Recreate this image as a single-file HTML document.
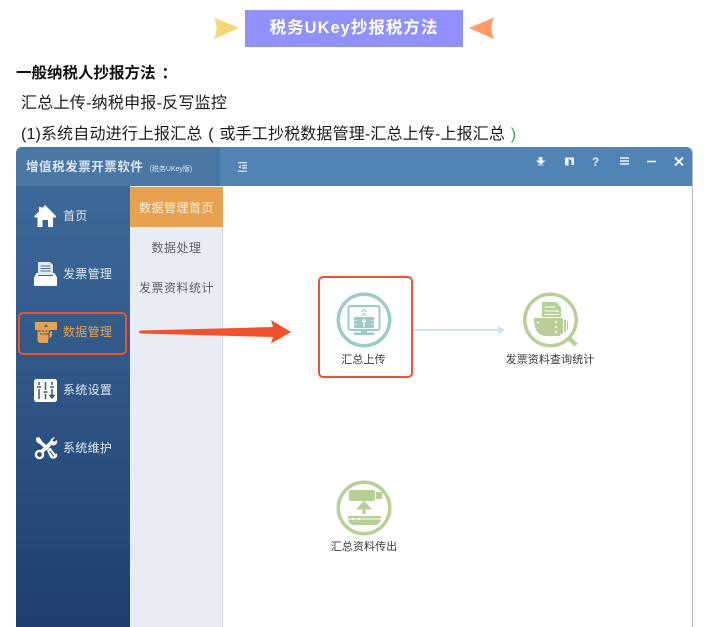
<!DOCTYPE html>
<html lang="zh">
<head>
<meta charset="utf-8">
<style>
html,body{margin:0;padding:0;background:#fff}
body{width:704px;height:627px;position:relative;overflow:hidden;font-family:"Liberation Sans","Noto Sans CJK SC",sans-serif;color:#222}
.a{position:absolute;white-space:nowrap}
.t{font-size:16px;line-height:20px;color:#1c1c1c;filter:blur(.2px)}
.nav{font-size:12px;line-height:16px;color:#e3e9f0;letter-spacing:.3px;filter:blur(.3px)}
.sub{font-size:12px;line-height:16px;color:#5c6068;width:93px;text-align:center;letter-spacing:.5px;filter:blur(.3px)}
.lab{font-size:11px;line-height:16px;color:#3a3a3a;text-align:center;letter-spacing:.1px;filter:blur(.25px)}
svg{position:absolute;overflow:visible}
svg.b{filter:blur(.35px)}
.p{display:inline-block;width:17px;text-align:center;font-family:"Liberation Sans",sans-serif}
</style>
</head>
<body>
<!-- title -->
<svg class="b" style="left:212px;top:15px" width="30" height="26" viewBox="0 0 30 26"><path d="M2 2.500 L27 13 L2 24 Q7 13 2 2.500Z" fill="#f7d872"/></svg>
<div class="a" style="left:245px;top:10px;width:218px;height:37px;background:#9090ff;color:#fff;font-size:16.500px;font-weight:bold;line-height:37px;text-align:center;letter-spacing:1px">税务UKey抄报税方法</div>
<svg class="b" style="left:468px;top:15px" width="30" height="26" viewBox="0 0 30 26"><path d="M26 2.500 L1 13 L26 24 Q21 13 26 2.500Z" fill="#ff9a66"/></svg>

<div class="a t" style="left:16px;top:64px;font-weight:bold;font-size:15.500px;color:#111">一般纳税人抄报方法<span style="margin-left:6px">：</span></div>
<div class="a t" style="left:21px;top:94px;letter-spacing:.25px">汇总上传-纳税申报-反写监控</div>
<div class="a t" style="left:21px;top:125px;letter-spacing:.15px">(1)系统自动进行上报汇总<span class="p">(</span>或手工抄税数据管理-汇总上传-上报汇总<span class="p" style="color:#3aa655">)</span></div>

<!-- app frame -->
<div class="a" style="left:16px;top:147px;width:677px;height:480px;background:#fff;border-radius:6px 6px 0 0;overflow:hidden;border-right:1px solid #b8bcc2;box-sizing:border-box">
  <div class="a" style="left:0;top:0;width:676px;height:39px;background:#5283b5"></div>
  <div class="a" style="left:0;top:0;width:204px;height:39px;background:#4b77a5"></div>
  <div class="a" style="left:0;top:39px;width:114px;height:441px;background:linear-gradient(#3d6a99,#1e3f6f)"></div>
  <div class="a" style="left:114px;top:39px;width:93px;height:441px;background:#e8ecf4;border-right:1px solid #d5d8de;box-sizing:border-box"></div>
  <div class="a" style="left:114px;top:40px;width:93px;height:40px;background:#e8a24f"></div>
</div>

<!-- header -->
<div class="a" style="left:26px;top:158px;font-size:12.500px;font-weight:bold;line-height:18px;color:#dbe5ef;letter-spacing:.55px;filter:blur(.3px)">增值税发票开票软件 <span style="font-size:7px;font-weight:normal;letter-spacing:0;margin-left:2px">(税务UKey版)</span></div>
<svg class="b" style="left:238px;top:162px" width="10" height="10" viewBox="0 0 10 10"><path d="M0 .7H9M4 3.500H9M4 6H9M0 9.200H9" stroke="#eef3f8" stroke-width="1.200" fill="none"/><path d="M2.700 3L.4 4.800 2.700 6.600Z" fill="#eef3f8"/></svg>
<svg class="b" style="left:530px;top:150px" width="160" height="24" viewBox="0 0 160 24">
  <path d="M9 7.500h3v3.500h2.500L10.500 14 7 11h2ZM7.500 15h6" fill="#fff" stroke="#fff" stroke-width=".8"/>
  <path d="M35 7.500h9V15h-2.500V10l-3-1v7l-3.500-1Z" fill="#eaf0f6"/>
  <text x="62" y="16" font-size="11.500" font-weight="bold" fill="#eaf0f6" font-family="Liberation Sans">?</text>
  <path d="M90 8h9M90 11h9M90 14h9" stroke="#eef3f8" stroke-width="1.500"/>
  <path d="M117 11.500h9" stroke="#fff" stroke-width="1.500"/>
  <path d="M145 7.500l8 8M153 7.500l-8 8" stroke="#fff" stroke-width="1.900"/>
</svg>

<!-- sidebar -->
<svg class="b" style="left:34px;top:205px" width="23" height="23" viewBox="0 0 23 23"><path d="M11 0 L22 11 Q22.500 12.500 21 12.500 L19 12.500 V22 H14 V15 H8.500 V22 H3.500 V12.500 H1.500 Q0 12.500 0.500 11 L5 6.500 V2 H8 V3.500Z" fill="#fff"/></svg>
<div class="a nav" style="left:63px;top:208px">首页</div>

<svg class="b" style="left:34px;top:262px" width="23" height="25" viewBox="0 0 23 25"><path d="M4 0H16L19 3V13H4Z" fill="#e3e9f0"/><path d="M6.500 4H16.500M6.500 6.500H16.500M6.500 9H16.500" stroke="#55708f" stroke-width="1"/><path d="M2.500 11H4V14H19V11H20.500L23 15.500V23Q23 24 21.500 24H1.500Q0 24 0 23V15.500Z" fill="#fff"/></svg>
<div class="a nav" style="left:63px;top:266px">发票管理</div>

<svg class="b" style="left:34px;top:321px" width="23" height="23" viewBox="0 0 23 23"><path d="M1 1H23V9H18V15L14 19V22H7Q3.500 22 3.500 18V9H1Z" fill="#e8a24f"/><path d="M4 10H18M6 13H12" stroke="#33557f" stroke-width="1" stroke-dasharray="2.500 1"/><path d="M10.500 6l1.500-2 1.500 2M12 13H15L16 9.500H19M15 13V18" stroke="#33557f" stroke-width="1.100" fill="none"/></svg>
<div class="a nav" style="left:63px;top:324px;color:#e8a24f">数据管理</div>
<div class="a" style="left:18px;top:312px;width:109px;height:43px;border:2px solid #f2512a;border-radius:5px;box-sizing:border-box"></div>

<svg class="b" style="left:34px;top:379px" width="23" height="23" viewBox="0 0 23 23"><rect width="23" height="23" rx="2.500" fill="#fff"/><path d="M5 3V6M5 10V20M11.500 3V11M11.500 15V20M18 3V6M18 10V17" stroke="#2f5581" stroke-width="1.500"/><path d="M3 8H7M9.500 13H13.500M16 8H20M16 16.500H20L18 19Z" stroke="#2f5581" stroke-width="1.400" fill="#2f5581"/></svg>
<div class="a nav" style="left:63px;top:382px">系统设置</div>

<svg class="b" style="left:34px;top:436px" width="24" height="24" viewBox="0 0 24 24">
  <path d="M4 4L14 13" stroke="#fff" stroke-width="3.500"/>
  <path d="M2 2L5 1 8 5 5 8 2 5Z" fill="#fff"/>
  <path d="M18 6L7.500 16" stroke="#fff" stroke-width="3.800"/>
  <path d="M23 4Q24 9 19 9.500 L16 7 Q16 2 21 1L18.500 4.500 20 6Z" fill="#fff"/>
  <circle cx="5.500" cy="18.500" r="3.600" fill="none" stroke="#fff" stroke-width="2.400"/>
  <path d="M13 14.500L16 11.500 23 18Q24 22 20 22.500 Q17 23 16 21Z" fill="#fff"/>
  <path d="M15.500 15L20 20.500M18 13.500L22 18" stroke="#2c5382" stroke-width="1"/>
</svg>
<div class="a nav" style="left:63px;top:440px">系统维护</div>

<!-- subnav -->
<div class="a sub" style="left:130px;top:200px;color:#f8efe2">数据管理首页</div>
<div class="a sub" style="left:130px;top:240px">数据处理</div>
<div class="a sub" style="left:130px;top:280px">发票资料统计</div>

<!-- arrow -->
<svg class="b" style="left:130px;top:315px" width="170" height="35" viewBox="0 0 170 35"><path d="M9 17Q9 15.500 11 15.500 L143 12 L141 5 L161 17 L141 28.500 L143 22 L11 18.500Q9 18.500 9 17Z" fill="#f2512a"/></svg>

<!-- main -->
<div class="a" style="left:318px;top:276px;width:95px;height:102px;border:2px solid #f2512a;border-radius:5px;box-sizing:border-box"></div>
<svg class="b" style="left:336px;top:292px" width="56" height="56" viewBox="0 0 56 56">
  <circle cx="28" cy="28" r="25.700" fill="#fff" stroke="#9dcbc9" stroke-width="3.500"/>
  <rect x="12.500" y="14" width="31" height="24" rx="2" fill="none" stroke="#9dcbc9" stroke-width="2"/>
  <rect x="18" y="25" width="20" height="11" fill="#9dcbc9"/>
  <path d="M28 35V28M26 30l2-2.500 2 2.500" stroke="#fff" stroke-width="1.300" fill="none"/>
  <path d="M20 28v1M20 32v1M36 28v1M36 32v1" stroke="#fff" stroke-width="1.200"/>
  <path d="M25.500 20l2.500-2.500 2.500 2.500M25.500 24l2.500-2.500 2.500 2.500" stroke="#9dcbc9" stroke-width="1.100" fill="none"/>
  <path d="M25 38h6v2.500H38V43H18v-2.500h7Z" fill="#9dcbc9"/>
</svg>
<div class="a lab" style="left:316px;top:352px;width:95px">汇总上传</div>

<svg class="b" style="left:414px;top:324px" width="92" height="12" viewBox="0 0 92 12"><path d="M0 6H85" stroke="#d5e3ef" stroke-width="2"/><path d="M84 1.500L91 6 84 10.500Z" fill="#d5e3ef"/></svg>

<svg class="b" style="left:523px;top:292px" width="56" height="58" viewBox="0 0 56 58">
  <circle cx="27.500" cy="28" r="25.700" fill="#fff" stroke="#b9cf98" stroke-width="3.500"/>
  <path d="M45 45L53 53" stroke="#b9cf98" stroke-width="4.500"/>
  <path d="M19 10H33L38 15V25H19Z" fill="#b9cf98"/>
  <path d="M21.500 15H32M21.500 19H36M21.500 22.500H36" stroke="#fff" stroke-width="1.100"/>
  <path d="M11 26H37V44H22Q11 43 11 26Z" fill="#b9cf98"/>
  <path d="M37 26H40V42H37ZM41 27.500H43V40H41ZM44 29H45V38H44Z" fill="#b9cf98"/>
  <circle cx="33" cy="30" r="1.100" fill="#fff"/><circle cx="33" cy="35" r="1.100" fill="#fff"/><circle cx="33" cy="40" r="1.100" fill="#fff"/>
  <circle cx="15" cy="30.500" r="1" fill="#fff"/>
</svg>
<div class="a lab" style="left:490px;top:352px;width:120px">发票资料查询统计</div>

<svg class="b" style="left:336px;top:480px" width="56" height="56" viewBox="0 0 56 56">
  <circle cx="28" cy="28" r="25.700" fill="#fff" stroke="#b9cf98" stroke-width="3.500"/>
  <rect x="13" y="10" width="26" height="11" rx="2" fill="#b9cf98"/>
  <rect x="40" y="12" width="6" height="7" fill="#b9cf98"/>
  <path d="M28 34V27M23.500 28L28 23 32.500 28Z" stroke="#b9cf98" stroke-width="3" fill="#b9cf98"/>
  <path d="M12 36H45V38Q45 45 38 45H19Q12 45 12 38Z" fill="#b9cf98"/>
  <path d="M12 39H45" stroke="#fff" stroke-width="1.100"/>
  <circle cx="17" cy="39" r="1.200" fill="#fff"/><circle cx="23" cy="39" r="1.200" fill="#fff"/>
</svg>
<div class="a lab" style="left:304px;top:539px;width:120px">汇总资料传出</div>
</body>
</html>
